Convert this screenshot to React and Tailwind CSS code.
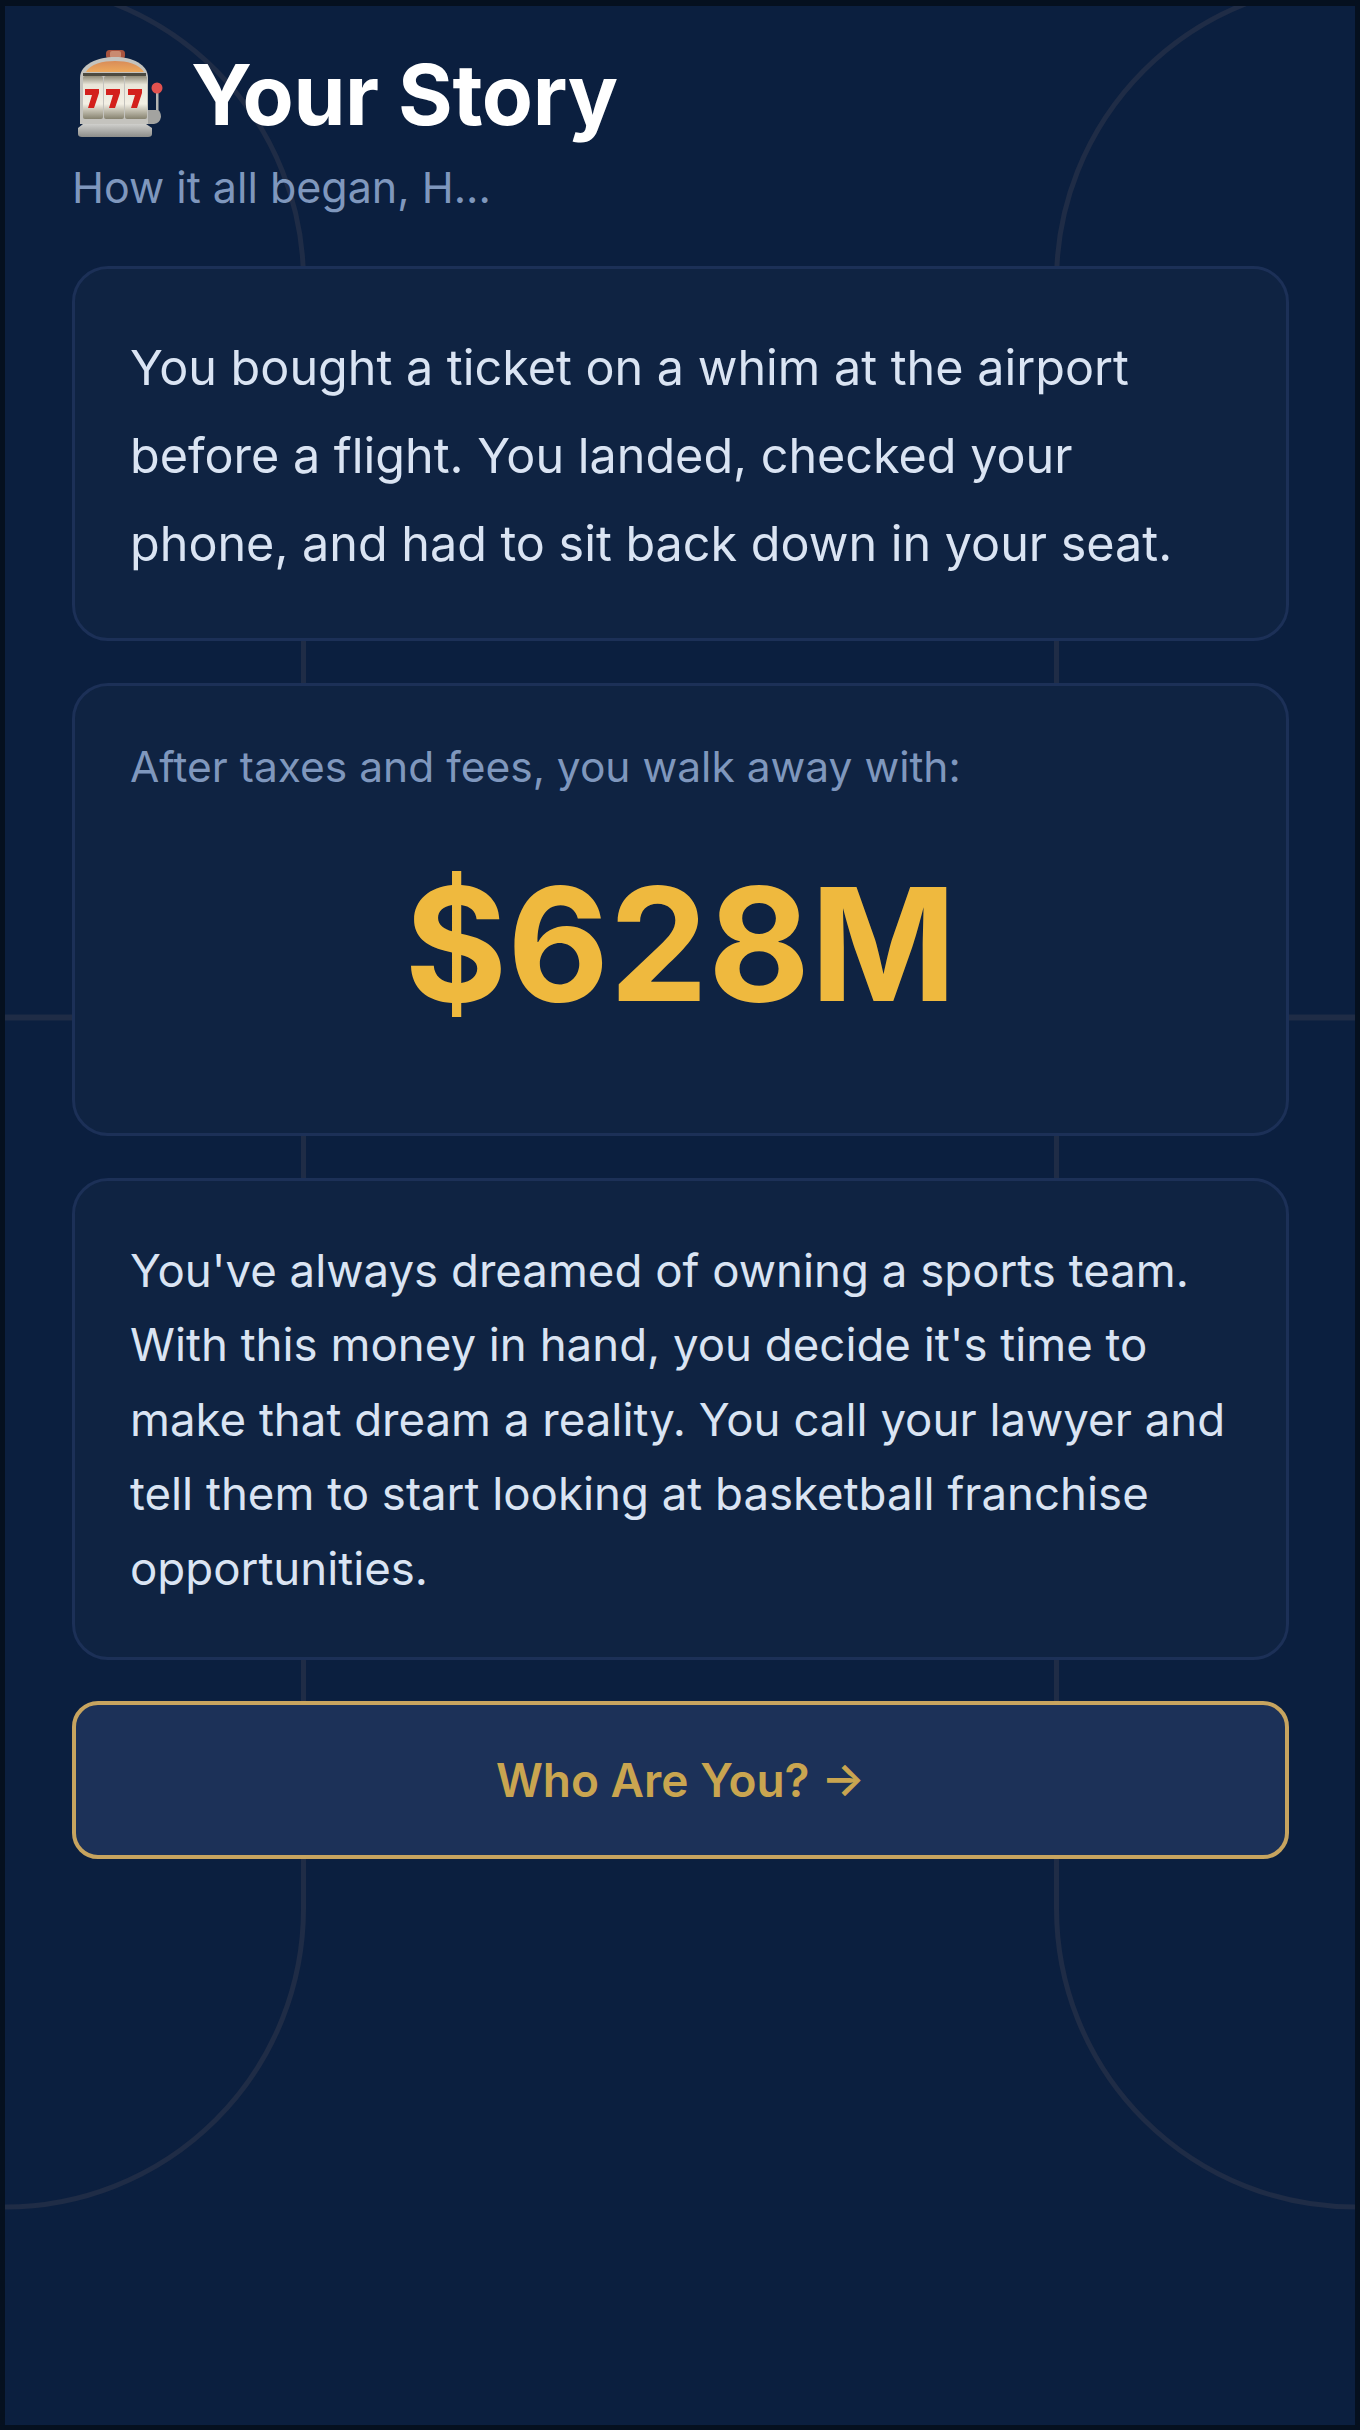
import React from "react";

function Slot() {
  return (
    <svg width="85" height="88" viewBox="18 19 85 88" className="shrink-0" aria-hidden="true">
      <defs>
        <linearGradient id="drum" x1="0" y1="0" x2="0" y2="1">
          <stop offset="0" stopColor="#8f8a78" />
          <stop offset="0.2" stopColor="#e8e5d8" />
          <stop offset="0.65" stopColor="#f2efe4" />
          <stop offset="1" stopColor="#86826f" />
        </linearGradient>
        <linearGradient id="steel" x1="0" y1="0" x2="0" y2="1">
          <stop offset="0" stopColor="#cfcfcc" />
          <stop offset="1" stopColor="#8d8d8a" />
        </linearGradient>
        <linearGradient id="dome" x1="0" y1="0" x2="0" y2="1">
          <stop offset="0" stopColor="#d98c58" />
          <stop offset="1" stopColor="#eda95c" />
        </linearGradient>
      </defs>
      <rect x="46" y="20" width="19" height="9" rx="3.5" fill="#a8543f" />
      <rect x="50" y="21" width="11" height="7" rx="2" fill="#c98a70" />
      <path d="M20 48 C20 34 38 27 55 27 C72 27 88 34 88 48 L88 94 L20 94 Z" fill="#c4c3be" />
      <path d="M26 42 C30 34 43 31 55 31 C67 31 79 34 84 42 Z" fill="url(#dome)" />
      <rect x="23" y="43" width="63" height="3" fill="#4c4a40" />
      <rect x="23" y="46" width="20" height="43" rx="2" fill="url(#drum)" />
      <rect x="44" y="46" width="20" height="43" rx="2" fill="url(#drum)" />
      <rect x="65" y="46" width="22" height="43" rx="2" fill="url(#drum)" />
      <path d="M25 59 H39 V63 L34 78 H28 L32 65 H25 Z" fill="#d3201c" />
      <path d="M46 59 H60 V63 L55 78 H49 L53 65 H46 Z" fill="#d3201c" />
      <path d="M68 59 H82 V63 L77 78 H71 L75 65 H68 Z" fill="#d3201c" />
      <rect x="96" y="60" width="2.5" height="26" fill="#b5b5b2" />
      <circle cx="97" cy="58" r="5.5" fill="#e2524f" />
      <path d="M88 80 H98 Q101 82 101 87 Q100 93 94 94 H88 Z" fill="#a3a3a0" />
      <path d="M23 94 H86 L92 98 V104 Q92 107 88 107 H22 Q18 107 18 104 V98 Z" fill="url(#steel)" />
    </svg>
  );
}

function Court() {
  const c = "#1f2c46";
  return (
    <svg className="absolute inset-0 w-full h-full" viewBox="0 0 1350 2419" fill="none" aria-hidden="true">
      <g stroke={c} strokeWidth="5">
        <line x1="0" y1="1011.5" x2="1350" y2="1011.5" strokeWidth="6" />
        <path d="M0 -23 A298.5 298.5 0 0 1 298.5 275 V1903 A298.5 298.5 0 0 1 0 2201" />
        <path d="M1350 -23 A298.5 298.5 0 0 0 1051.5 275 V1903 A298.5 298.5 0 0 0 1350 2201" />
      </g>
    </svg>
  );
}

const card = "rounded-[36px] border-[3px] border-[#1c3057] bg-[#0f2342] px-[55px] relative";

export default function App() {
  return (
    <div className="bg-[#05101f] h-[2430px] pt-[6px] px-[5px] pb-[5px] overflow-hidden font-['Inter',sans-serif]">
      <div className="relative h-full bg-[#0b1f3f] overflow-hidden">
        <Court />
        <div className="relative pl-[67px] pr-[66px]">
          <div className="flex items-center h-[88px] mt-[43px] pl-[6px]">
            <Slot />
            <h1 className="ml-[28px] pt-[4px] text-[83.6px] leading-none font-bold text-white tracking-[-0.4px]">Your Story</h1>
          </div>
          <p className="mt-[19px] text-[43px] leading-[62px] text-[#7f97bd]">How it all began, H...</p>
          <div className={`${card} mt-[48px] h-[375px] pt-[55px]`}>
            <p className="text-[48.5px] leading-[88px] text-[#dae4f3]">You bought a ticket on a whim at the airport before a flight. You landed, checked your phone, and had to sit back down in your seat.</p>
          </div>
          <div className={`${card} mt-[42px] h-[453px] pt-[50px]`}>
            <p className="text-[42.5px] leading-[62px] text-[#7f97bd]">After taxes and fees, you walk away with:</p>
            <p className="mt-[58px] text-center text-[157px] leading-[176px] font-bold text-[#efb93e]">$628M</p>
          </div>
          <div className={`${card} mt-[42px] h-[482px] pt-[53px]`}>
            <p className="text-[45.6px] leading-[74.4px] text-[#dae4f3]">You've always dreamed of owning a sports team. With this money in hand, you decide it's time to make that dream a reality. You call your lawyer and tell them to start looking at basketball franchise opportunities.</p>
          </div>
          <button className="mt-[41px] w-full h-[158px] rounded-[26px] border-[4px] border-[#c7a45f] bg-[#1c3158] text-[46px] font-semibold text-[#c9a550]">Who Are You? →</button>
        </div>
      </div>
    </div>
  );
}
